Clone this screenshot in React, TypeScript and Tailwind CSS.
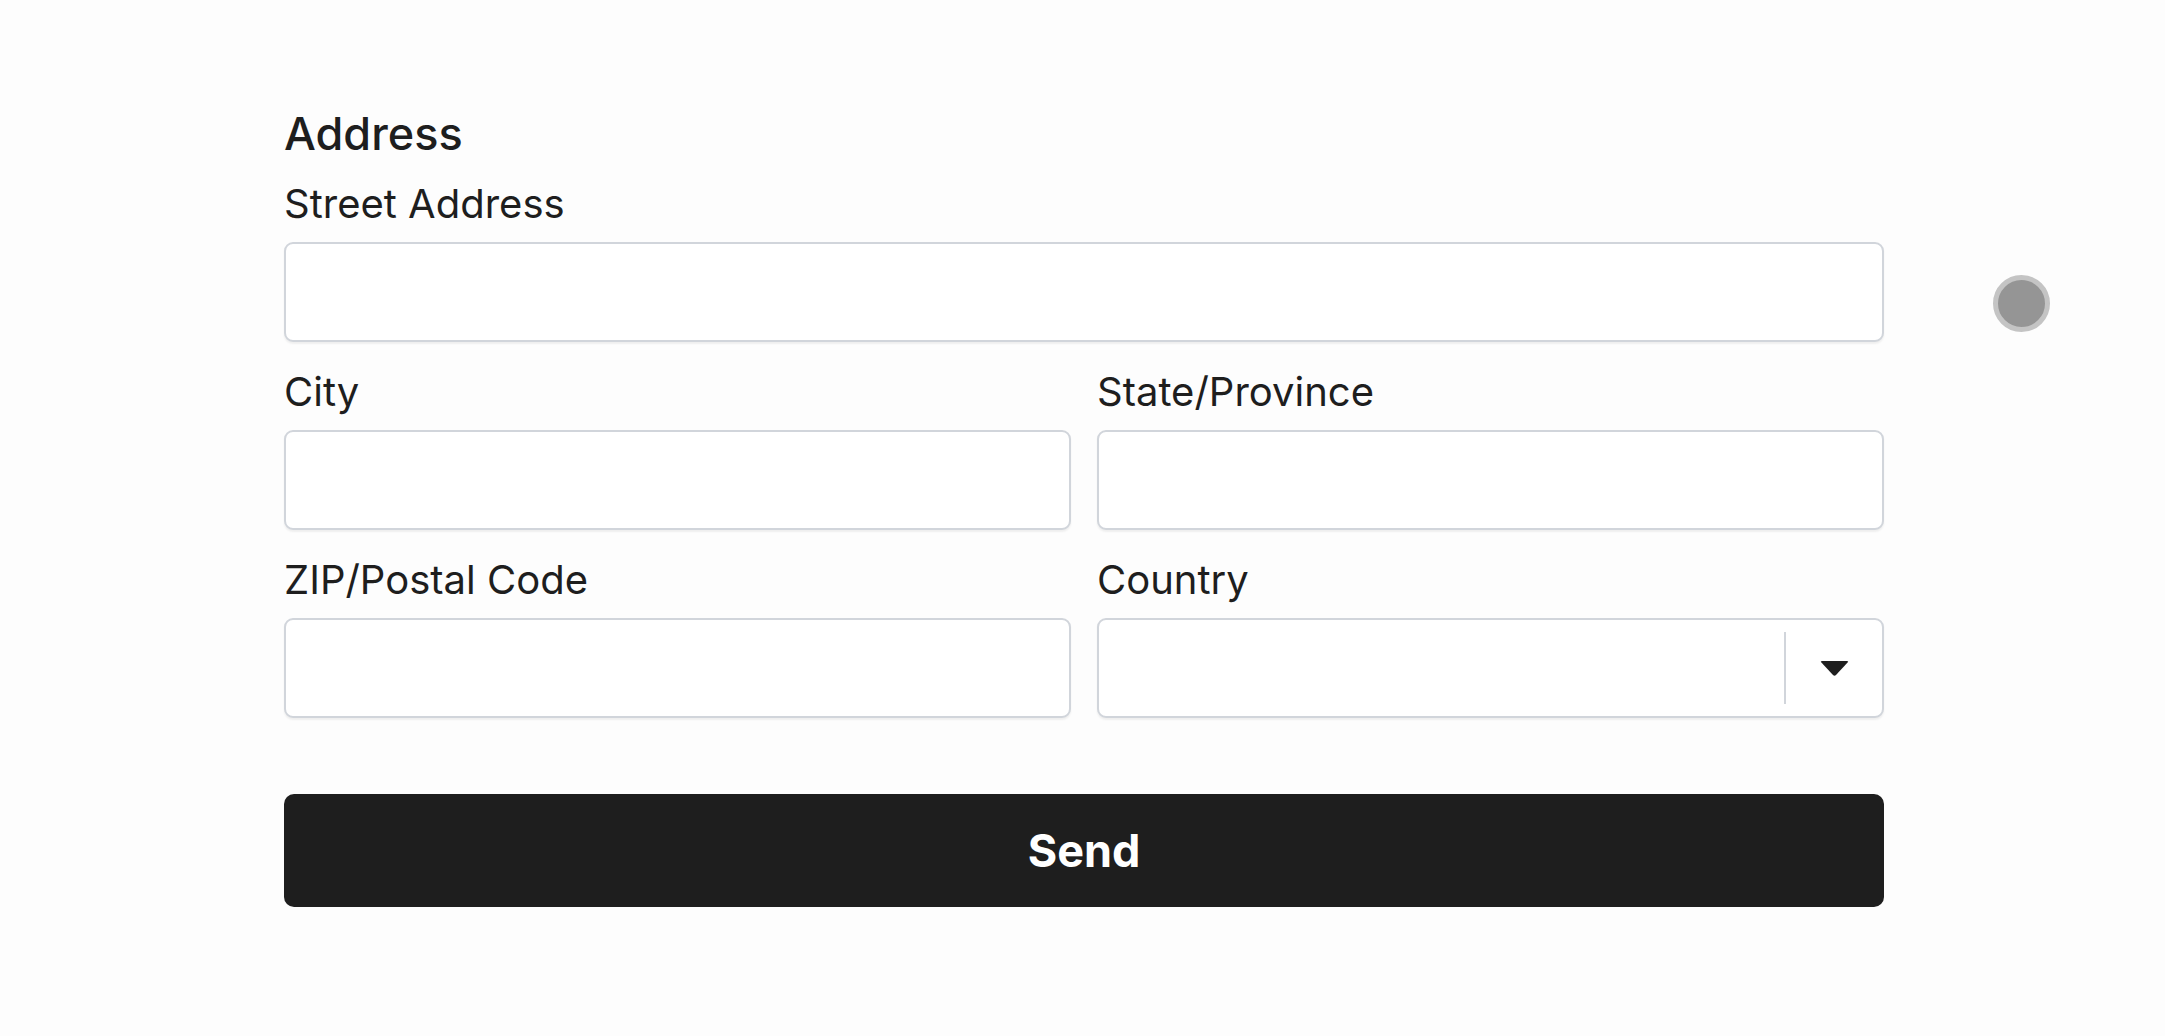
import { ReactNode } from "react";

function Field({ label, children }: { label: string; children: ReactNode }) {
  return (
    <div className="flex flex-col">
      <label className="text-[40px] leading-[48px] text-[#1e1e1e] mb-[14px]">{label}</label>
      {children}
    </div>
  );
}

const inputCls =
  "h-[100px] w-full rounded-[9px] border-2 border-[#d1d5db] bg-white shadow-[0_2px_2px_rgba(0,0,0,0.06)] outline-none px-6 text-[40px]";

export default function App() {
  return (
    <div className="relative min-h-[1036px] bg-[#fdfdfd] font-['Inter','Noto_Sans',sans-serif]">
      <form className="w-[1600px] ml-[284px] pt-[107px]" onSubmit={(e) => e.preventDefault()}>
        <h2 className="text-[45px] leading-[54px] font-medium text-[#1e1e1e] mb-[19px]">Address</h2>

        <div className="flex flex-col gap-[26px]">
          <Field label="Street Address">
            <input className={inputCls} />
          </Field>

          <div className="grid grid-cols-2 gap-x-[26px]">
            <Field label="City">
              <input className={inputCls} />
            </Field>
            <Field label="State/Province">
              <input className={inputCls} />
            </Field>
          </div>

          <div className="grid grid-cols-2 gap-x-[26px]">
            <Field label="ZIP/Postal Code">
              <input className={inputCls} />
            </Field>
            <Field label="Country">
              <div className="h-[100px] w-full rounded-[9px] border-2 border-[#d1d5db] bg-white shadow-[0_2px_2px_rgba(0,0,0,0.06)] flex items-center">
                <div className="flex-1" />
                <div className="w-[2px] h-[72px] bg-[#d1d5db]" />
                <div className="w-[96px] flex items-center justify-center">
                  <svg width="31" height="18" viewBox="0 0 31 18">
                    <path d="M3 2 H28 Q30 2 28.6 3.6 L17 16 Q15.5 17.6 14 16 L2.4 3.6 Q1 2 3 2 Z" fill="#1e1e1e" />
                  </svg>
                </div>
              </div>
            </Field>
          </div>
        </div>

        <button
          type="submit"
          className="mt-[76px] w-full h-[113px] rounded-[10px] bg-[#1e1e1e] text-white text-[45px] font-bold"
        >
          Send
        </button>
      </form>

      <div className="absolute left-[1993px] top-[275px] w-[57px] h-[57px] rounded-full bg-[#959595] border-[5px] border-[#c4c4c4]" />
    </div>
  );
}
